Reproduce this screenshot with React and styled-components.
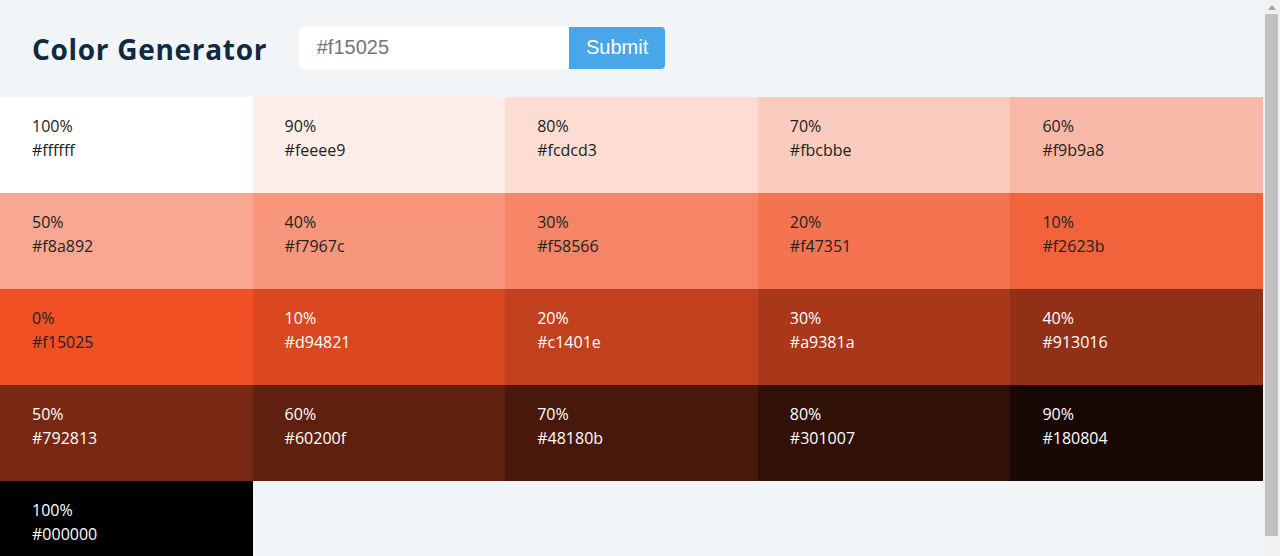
import styled, { createGlobalStyle } from 'styled-components';

const GlobalStyle = createGlobalStyle`
  * {
    box-sizing: border-box;
    margin: 0;
    padding: 0;
  }
  body {
    margin: 0;
    background: #f1f5f8;
    font-family: "Open Sans", "Noto Sans", sans-serif;
    color: #102a42;
  }
`;

const colors = [
  { weight: 100, hex: 'ffffff' },
  { weight: 90, hex: 'feeee9' },
  { weight: 80, hex: 'fcdcd3' },
  { weight: 70, hex: 'fbcbbe' },
  { weight: 60, hex: 'f9b9a8' },
  { weight: 50, hex: 'f8a892' },
  { weight: 40, hex: 'f7967c' },
  { weight: 30, hex: 'f58566' },
  { weight: 20, hex: 'f47351' },
  { weight: 10, hex: 'f2623b' },
  { weight: 0, hex: 'f15025' },
  { weight: 10, hex: 'd94821' },
  { weight: 20, hex: 'c1401e' },
  { weight: 30, hex: 'a9381a' },
  { weight: 40, hex: '913016' },
  { weight: 50, hex: '792813' },
  { weight: 60, hex: '60200f' },
  { weight: 70, hex: '48180b' },
  { weight: 80, hex: '301007' },
  { weight: 90, hex: '180804' },
  { weight: 100, hex: '000000' },
];

const Page = styled.div`
  display: flex;
  align-items: flex-start;
`;

const Main = styled.main`
  flex: 1;
  min-width: 0;
`;

// window scrollbar as seen in the screenshot
const ScrollTrack = styled.aside`
  position: sticky;
  top: 0;
  width: 17px;
  height: 100vh;
  background: #f1f1f1;
  display: flex;
  flex-direction: column;
  align-items: center;
`;

const ScrollArrow = styled.div`
  height: 14px;
  display: flex;
  align-items: center;
  justify-content: center;
  width: 100%;
`;

const ScrollThumb = styled.div`
  width: 13px;
  flex: 1;
  background: #c1c1c1;
  margin-bottom: 20px;
`;

const Header = styled.section`
  display: flex;
  align-items: center;
  height: 97px;
  padding: 0 2rem;
`;

const Title = styled.h3`
  font-size: 1.75rem;
  font-weight: 700;
  letter-spacing: 0.7px;
  color: #102a42;
  margin-right: 2rem;
`;

const Form = styled.form`
  display: flex;
  margin-top: -2px;
`;

const Input = styled.input`
  width: 270px;
  height: 42px;
  border: none;
  outline: none;
  padding: 0 1.1rem;
  font-family: "Liberation Sans", Arial, sans-serif;
  font-size: 1.25rem;
  color: #333;
  background: #fff;
  border-radius: 4px 0 0 4px;

  &::placeholder {
    color: #757575;
  }
`;

const Button = styled.button`
  width: 96px;
  height: 42px;
  border: none;
  background: #49a6e9;
  color: #fff;
  font-family: "Liberation Sans", Arial, sans-serif;
  font-size: 1.25rem;
  border-radius: 0 4px 4px 0;
  cursor: pointer;
`;

const Colors = styled.section`
  display: grid;
  grid-template-columns: repeat(5, 1fr);
  grid-auto-rows: 96px;
`;

const Tile = styled.article`
  background: ${(p) => p.$bg};
  color: ${(p) => (p.$light ? '#fff' : '#222')};
  padding: 17px 2rem 1rem;
  font-size: 1rem;
  line-height: 1.5;
  cursor: pointer;
`;

const Line = styled.p`
  margin: 0;
`;

export default function App() {
  return (
    <>
      <GlobalStyle />
      <Page>
        <Main>
          <Header>
            <Title>Color Generator</Title>
            <Form onSubmit={(e) => e.preventDefault()}>
              <Input type="text" placeholder="#f15025" />
              <Button type="submit">Submit</Button>
            </Form>
          </Header>
          <Colors>
            {colors.map((c, i) => (
              <Tile key={i} $bg={`#${c.hex}`} $light={i > 10}>
                <Line>{c.weight}%</Line>
                <Line>#{c.hex}</Line>
              </Tile>
            ))}
          </Colors>
        </Main>
        <ScrollTrack>
          <ScrollArrow>
            <svg width="8" height="5" viewBox="0 0 8 5">
              <path d="M4 0 L8 5 L0 5 Z" fill="#a3a3a3" />
            </svg>
          </ScrollArrow>
          <ScrollThumb />
        </ScrollTrack>
      </Page>
    </>
  );
}
